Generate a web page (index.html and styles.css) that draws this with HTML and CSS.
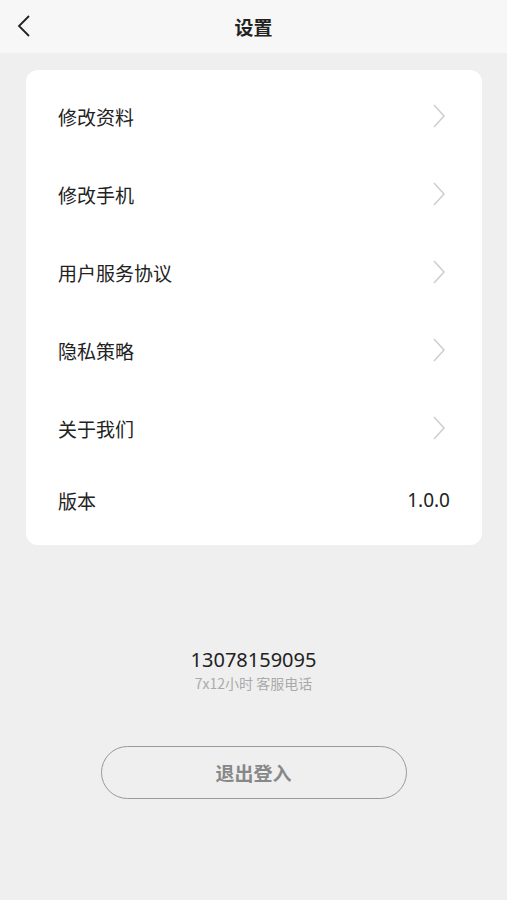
FILE: index.html
```html
<!DOCTYPE html>
<html lang="zh-CN">

<head>
    <meta charset="UTF-8">
    <title>设置</title>

    <!-- CSS -->
    <link rel="stylesheet" href="styles.css">

</head>

<body>
    <div class="topbar">
        <span class="back">
            <svg width="14" height="22" viewBox="0 0 14 22">
                <path d="M12 1 L2 11 L12 21" fill="none" stroke="#222" stroke-width="1.8" />
            </svg>
        </span>
        <h1>设置</h1>
    </div>

    <div class="card">
        <div class="row">
            <span>修改资料</span>
            <svg class="arrow" width="14" height="24" viewBox="0 0 14 24">
                <path d="M2 1 L12 12 L2 23" fill="none" stroke="#cfcfcf" stroke-width="1.6" />
            </svg>
        </div>
        <div class="row">
            <span>修改手机</span>
            <svg class="arrow" width="14" height="24" viewBox="0 0 14 24">
                <path d="M2 1 L12 12 L2 23" fill="none" stroke="#cfcfcf" stroke-width="1.6" />
            </svg>
        </div>
        <div class="row">
            <span>用户服务协议</span>
            <svg class="arrow" width="14" height="24" viewBox="0 0 14 24">
                <path d="M2 1 L12 12 L2 23" fill="none" stroke="#cfcfcf" stroke-width="1.6" />
            </svg>
        </div>
        <div class="row">
            <span>隐私策略</span>
            <svg class="arrow" width="14" height="24" viewBox="0 0 14 24">
                <path d="M2 1 L12 12 L2 23" fill="none" stroke="#cfcfcf" stroke-width="1.6" />
            </svg>
        </div>
        <div class="row">
            <span>关于我们</span>
            <svg class="arrow" width="14" height="24" viewBox="0 0 14 24">
                <path d="M2 1 L12 12 L2 23" fill="none" stroke="#cfcfcf" stroke-width="1.6" />
            </svg>
        </div>
        <div class="row version">
            <span>版本</span>
            <span class="num">1.0.0</span>
        </div>
    </div>

    <div class="service">
        <div class="phone">13078159095</div>
        <div class="hint">7x12小时 客服电话</div>
    </div>

    <button class="logout">退出登入</button>
</body>

</html>
```

FILE: styles.css
```css
body {
    margin: 0;
    height: 900px;
    background-color: #efefef;
    font-family: 'Noto Sans CJK SC', 'Noto Sans', sans-serif;
    color: #222;
}

.topbar {
    height: 53px;
    background-color: #f7f7f7;
    display: flex;
    align-items: center;
    justify-content: center;
    position: relative;
}

.topbar h1 {
    margin: 0;
    font-size: 19px;
    font-weight: bold;
    color: #222;
}

.back {
    position: absolute;
    left: 17px;
    top: 15px;
    display: flex;
}

.card {
    margin: 17px 25px 0 26px;
    background-color: #fff;
    border-radius: 12px;
    padding: 7px 32px 10px 32px;
}

.row {
    height: 78px;
    display: flex;
    align-items: center;
    justify-content: space-between;
    font-size: 19px;
}

.row .arrow {
    margin-right: 4px;
}

.row.version {
    height: 66px;
    padding-bottom: 2px;
}

.num {
    font-family: 'Noto Sans', sans-serif;
}

.service {
    margin-top: 102px;
    text-align: center;
}

.phone {
    font-family: 'Noto Sans', sans-serif;
    font-size: 20px;
    color: #222;
    line-height: 26px;
}

.hint {
    font-size: 14px;
    color: #aaa;
    line-height: 20px;
}

.logout {
    display: block;
    margin: 53px auto 0 auto;
    width: 306px;
    height: 53px;
    border: 1.5px solid #999;
    border-radius: 27px;
    background-color: transparent;
    font-family: 'Noto Sans CJK SC', sans-serif;
    font-size: 19px;
    font-weight: bold;
    color: #888;
}
```
